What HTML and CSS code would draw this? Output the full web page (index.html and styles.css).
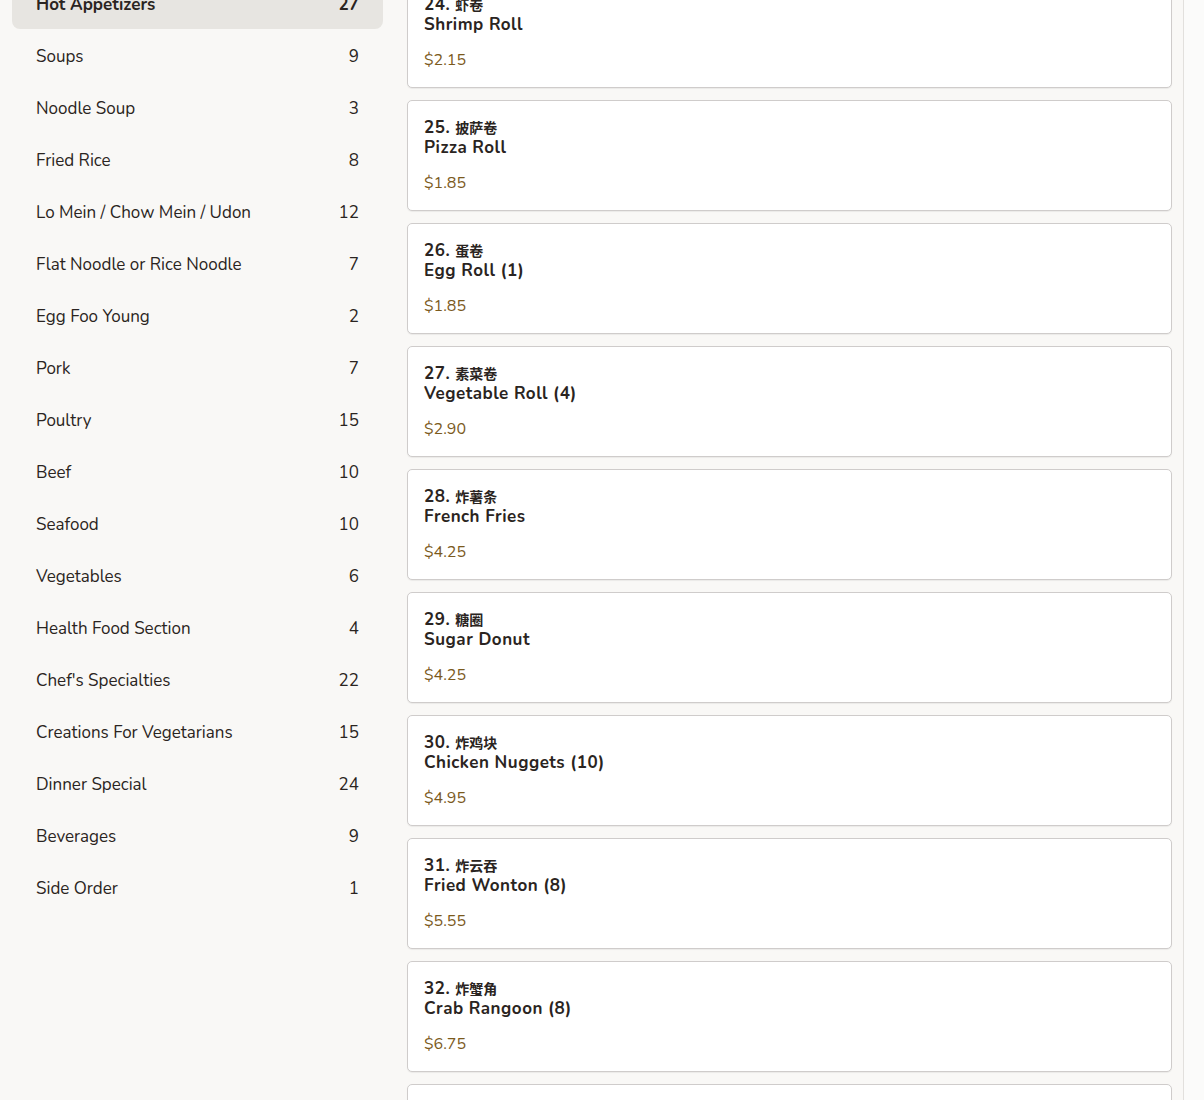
FILE: index.html
```html
<!DOCTYPE html>
<html lang="en">
<head>
<meta charset="utf-8">
<title>Menu</title>
<link rel="stylesheet" href="styles.css">
</head>
<body>
<div class="page">
  <nav class="sidebar">
    <a class="cat active"><span class="name">Hot Appetizers</span><span class="count">27</span></a>
    <a class="cat"><span class="name">Soups</span><span class="count">9</span></a>
    <a class="cat"><span class="name">Noodle Soup</span><span class="count">3</span></a>
    <a class="cat"><span class="name">Fried Rice</span><span class="count">8</span></a>
    <a class="cat"><span class="name">Lo Mein / Chow Mein / Udon</span><span class="count">12</span></a>
    <a class="cat"><span class="name">Flat Noodle or Rice Noodle</span><span class="count">7</span></a>
    <a class="cat"><span class="name">Egg Foo Young</span><span class="count">2</span></a>
    <a class="cat"><span class="name">Pork</span><span class="count">7</span></a>
    <a class="cat"><span class="name">Poultry</span><span class="count">15</span></a>
    <a class="cat"><span class="name">Beef</span><span class="count">10</span></a>
    <a class="cat"><span class="name">Seafood</span><span class="count">10</span></a>
    <a class="cat"><span class="name">Vegetables</span><span class="count">6</span></a>
    <a class="cat"><span class="name">Health Food Section</span><span class="count">4</span></a>
    <a class="cat"><span class="name">Chef's Specialties</span><span class="count">22</span></a>
    <a class="cat"><span class="name">Creations For Vegetarians</span><span class="count">15</span></a>
    <a class="cat"><span class="name">Dinner Special</span><span class="count">24</span></a>
    <a class="cat"><span class="name">Beverages</span><span class="count">9</span></a>
    <a class="cat"><span class="name">Side Order</span><span class="count">1</span></a>
  </nav>
  <main class="items">
    <div class="card"><div class="title">24. <span class="zh">虾卷</span></div><div class="title">Shrimp Roll</div><div class="price">$2.15</div></div>
    <div class="card"><div class="title">25. <span class="zh">披萨卷</span></div><div class="title">Pizza Roll</div><div class="price">$1.85</div></div>
    <div class="card"><div class="title">26. <span class="zh">蛋卷</span></div><div class="title">Egg Roll (1)</div><div class="price">$1.85</div></div>
    <div class="card"><div class="title">27. <span class="zh">素菜卷</span></div><div class="title">Vegetable Roll (4)</div><div class="price">$2.90</div></div>
    <div class="card"><div class="title">28. <span class="zh">炸薯条</span></div><div class="title">French Fries</div><div class="price">$4.25</div></div>
    <div class="card"><div class="title">29. <span class="zh">糖圈</span></div><div class="title">Sugar Donut</div><div class="price">$4.25</div></div>
    <div class="card"><div class="title">30. <span class="zh">炸鸡块</span></div><div class="title">Chicken Nuggets (10)</div><div class="price">$4.95</div></div>
    <div class="card"><div class="title">31. <span class="zh">炸云吞</span></div><div class="title">Fried Wonton (8)</div><div class="price">$5.55</div></div>
    <div class="card"><div class="title">32. <span class="zh">炸蟹角</span></div><div class="title">Crab Rangoon (8)</div><div class="price">$6.75</div></div>
    <div class="card"><div class="title">33. <span class="zh">鸡翅</span></div><div class="title">Chicken Wings (4)</div><div class="price">$6.95</div></div>
  </main>
  <div class="gutter"></div>
</div>
</body>
</html>
```

FILE: styles.css
```css
html, body {
  margin: 0;
  padding: 0;
  background: #f9f8f6;
  overflow: hidden;
}
body {
  font-family: "Nunito", "Lato", "Noto Sans CJK SC", sans-serif;
  color: #2a2421;
}
.page {
  display: flex;
  align-items: flex-start;
  margin-top: -23px;
  padding-left: 12px;
  height: 1200px;
}
.sidebar {
  width: 371px;
  flex: none;
  display: flex;
  flex-direction: column;
}
.cat {
  display: flex;
  justify-content: space-between;
  align-items: center;
  box-sizing: border-box;
  height: 52px;
  padding: 2px 24px 0;
  font-size: 17px;
  border-radius: 8px;
  color: #2a2421;
}
.cat.active {
  background: #e7e5e1;
  font-weight: 700;
}
.items {
  margin-left: 24px;
  width: 765px;
  flex: none;
  display: flex;
  flex-direction: column;
  gap: 12px;
}
.card {
  box-sizing: border-box;
  height: 111px;
  overflow: hidden;
  background: #fff;
  border: 1px solid #cfcccb;
  border-radius: 5px;
  padding: 17px 16px 0;
  box-shadow: 0 1px 1px rgba(0,0,0,0.06);
}
.title {
  height: 20px;
  font-size: 17px;
  font-weight: 700;
  line-height: 20px;
  letter-spacing: 0.5px;
  white-space: nowrap;
}
.zh {
  font-family: "Noto Sans CJK SC", sans-serif;
  font-size: 14px;
  line-height: 1;
  letter-spacing: 0;
}
.price {
  margin-top: 14px;
  font-size: 16px;
  line-height: 22px;
  color: #7b5a1d;
}
.gutter {
  margin-left: 11px;
  flex: 1;
  align-self: stretch;
  border-left: 1px solid #e2e0dd;
  background: #fbfbfa;
}
```
